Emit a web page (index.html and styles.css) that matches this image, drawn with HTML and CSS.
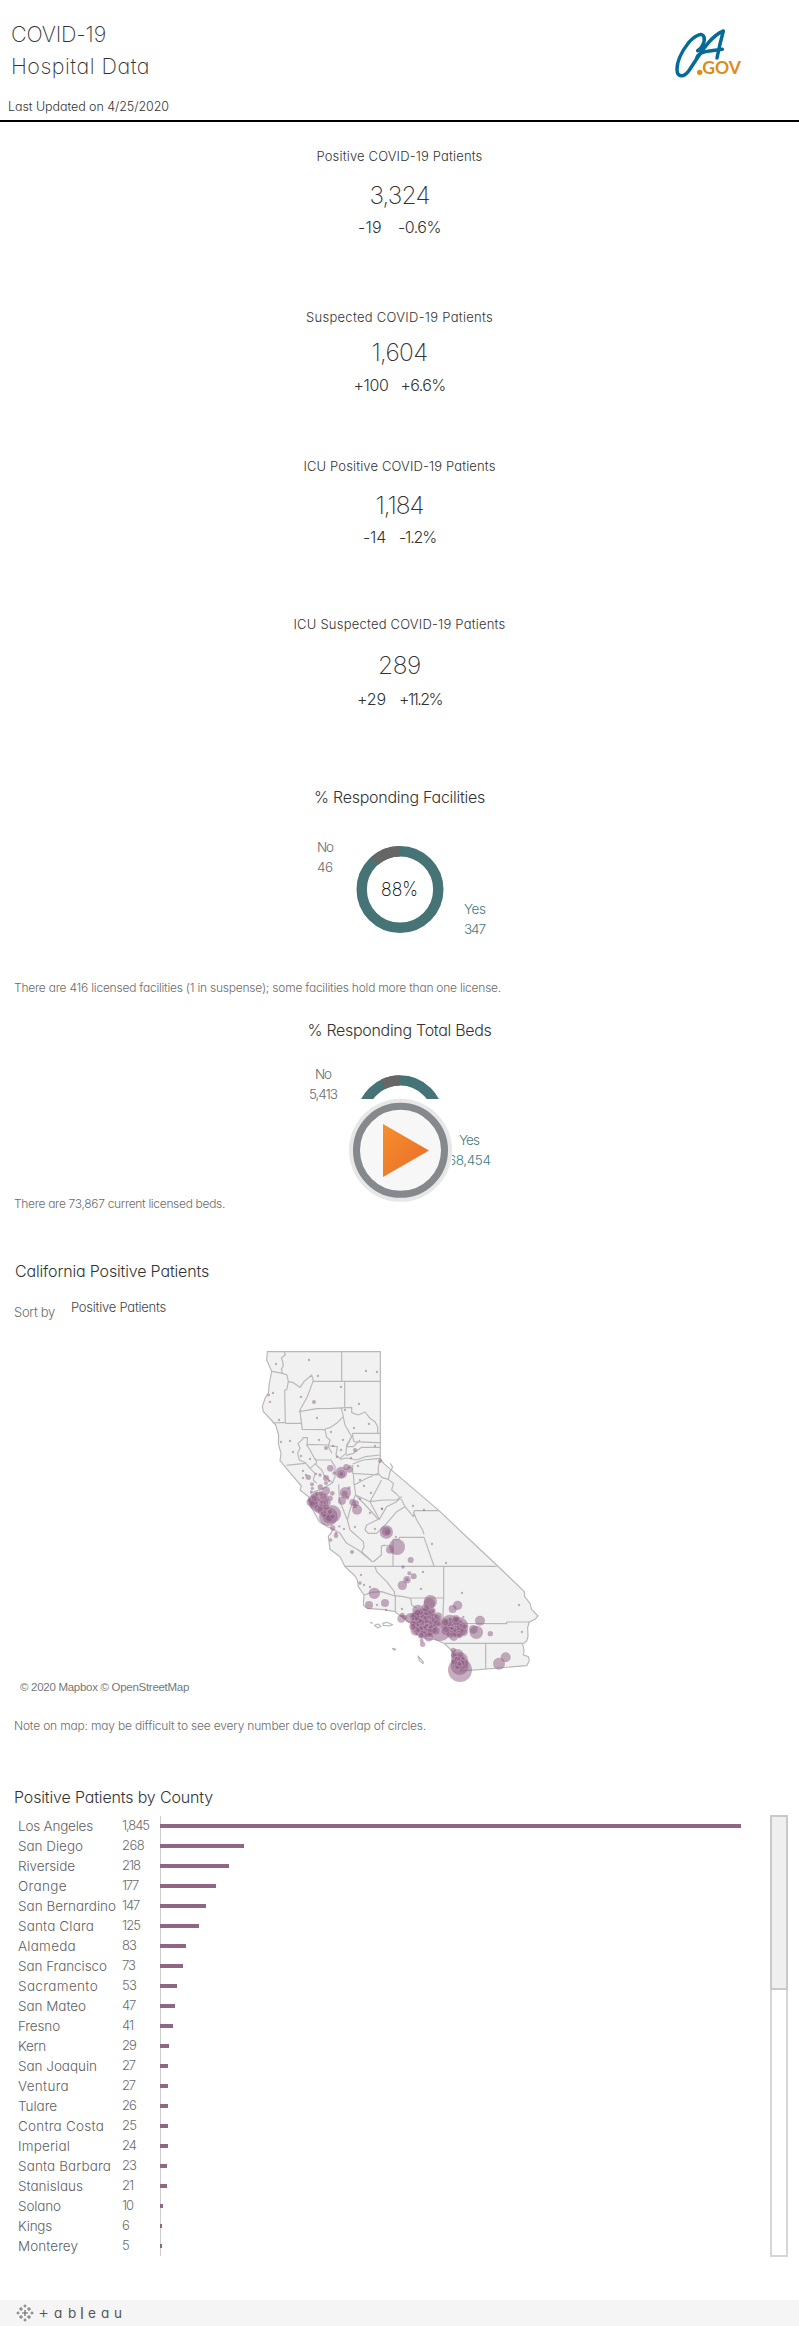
FILE: index.html
```html
<!DOCTYPE html>
<html lang="en">
<head>
<meta charset="utf-8">
<title>COVID-19 Hospital Data</title>
<link rel="stylesheet" href="styles.css">
</head>
<body>
<header class="header">
  <div>
    <h1 class="title"><span data-w="95">COVID-19</span><br><span data-w="139">Hospital Data</span></h1>
    <p class="updated"><span data-w="161">Last Updated on 4/25/2020</span></p>
  </div>
  <svg class="logo" viewBox="0 0 360 240" width="120" height="80">
    <g fill="none" stroke="#046b99" stroke-width="10.5" stroke-linecap="round" stroke-linejoin="round">
      <path d="M143 107C154 102 166 80 162 66C157 50 134 62 115 84C96 108 81 140 81 163C81 188 101 188 116 168C145 126 178 64 220 48C214 70 206 103 201 129"/>
      <path d="M141 126C151 107 185 107 217 103"/>
    </g>
    <circle cx="149" cy="172" r="8" fill="#dc8c18"/>
    <text class="gov" x="157" y="177" textLength="116" lengthAdjust="spacingAndGlyphs">GOV</text>
  </svg>
</header>

<main>
  <section class="kpi kpi-positive">
    <h2 class="kpi-title"><span data-w="166">Positive COVID-19 Patients</span></h2>
    <p class="kpi-value"><span data-w="60">3,324</span></p>
    <p class="kpi-delta"><span data-w="24">-19</span><span data-w="43">-0.6%</span></p>
  </section>
  <section class="kpi kpi-suspected">
    <h2 class="kpi-title"><span data-w="187">Suspected COVID-19 Patients</span></h2>
    <p class="kpi-value"><span data-w="56">1,604</span></p>
    <p class="kpi-delta"><span data-w="35">+100</span><span data-w="45">+6.6%</span></p>
  </section>
  <section class="kpi kpi-icu">
    <h2 class="kpi-title"><span data-w="192">ICU Positive COVID-19 Patients</span></h2>
    <p class="kpi-value"><span data-w="48">1,184</span></p>
    <p class="kpi-delta"><span data-w="23">-14</span><span data-w="37">-1.2%</span></p>
  </section>
  <section class="kpi kpi-icu-suspected">
    <h2 class="kpi-title"><span data-w="212">ICU Suspected COVID-19 Patients</span></h2>
    <p class="kpi-value"><span data-w="43">289</span></p>
    <p class="kpi-delta"><span data-w="29">+29</span><span data-w="43">+11.2%</span></p>
  </section>

  <section class="ratio ratio-facilities">
    <h2 class="heading"><span data-w="171">% Responding Facilities</span></h2>
    <svg class="donut" viewBox="250 830 300 130" width="300" height="130">
      <circle class="ring yes" cx="400" cy="889.5" r="38.3"/>
      <circle class="ring no" cx="400" cy="889.5" r="38.3" pathLength="100" stroke-dasharray="11.7 100" transform="rotate(-132.1 400 889.5)"/>
      <text class="label" x="317" y="852" textLength="17">No</text>
      <text class="label" x="317" y="872" textLength="16">46</text>
      <text class="percent" x="381" y="896" textLength="37" lengthAdjust="spacingAndGlyphs">88%</text>
      <text class="label teal" x="464" y="914" textLength="22">Yes</text>
      <text class="label teal" x="464" y="934" textLength="22">347</text>
    </svg>
    <p class="note"><span data-w="487">There are 416 licensed facilities (1 in suspense); some facilities hold more than one license.</span></p>
  </section>

  <section class="ratio ratio-beds">
    <h2 class="heading"><span data-w="184">% Responding Total Beds</span></h2>
    <svg class="donut" viewBox="250 1060 300 130" width="300" height="130">
      <defs>
        <clipPath id="upper"><rect x="340" y="1060" width="120" height="39"/></clipPath>
        <clipPath id="right"><rect x="452" y="1130" width="60" height="50"/></clipPath>
        <linearGradient id="orange" x1="0" y1="0" x2="1" y2="1"><stop offset="0" stop-color="#f58f2d"/><stop offset="1" stop-color="#e96b2a"/></linearGradient>
      </defs>
      <g clip-path="url(#upper)">
        <circle class="ring yes" cx="400" cy="1118.7" r="38.3"/>
        <circle class="ring no" cx="400" cy="1118.7" r="38.3" pathLength="100" stroke-dasharray="7.3 100" transform="rotate(-116.4 400 1118.7)"/>
      </g>
      <text class="label" x="315" y="1079" textLength="17">No</text>
      <text class="label" x="309" y="1099" textLength="29">5,413</text>
      <text class="label teal" x="459" y="1145" textLength="21">Yes</text>
      <text class="label teal" x="448" y="1165" textLength="43" clip-path="url(#right)">68,454</text>
      <circle cx="400.5" cy="1150.3" r="51.5" fill="#e7e7e7"/>
      <circle cx="400.5" cy="1150.3" r="44" fill="#f7f7f7" stroke="#85888c" stroke-width="7"/>
      <path d="M383 1124L429 1150.5L383 1177Z" fill="url(#orange)"/>
    </svg>
    <p class="note"><span data-w="211">There are 73,867 current licensed beds.</span></p>
  </section>

  <section class="map-section">
    <h2 class="heading"><span data-w="194">California Positive Patients</span></h2>
    <div class="sort"><span class="sort-label"><span data-w="41">Sort by</span></span><span class="sort-value"><span data-w="95">Positive Patients</span></span></div>
    <svg class="map" viewBox="0 30 900 1050" width="300" height="350">
      <path class="state" d="M52 65H391V385L401 400L567 542L660 630L740 705L823 785L824 800L840 820L845 838L864 858L855 868L838 876L833 892L834 920L830 933L818 942L822 962L820 975L835 980L838 992L830 1007L660 1021L632 1023L622 995L605 962L585 942L560 930L525 925L500 890L475 875L455 860L435 845L400 839L352 835L340 825L342 795L325 770L322 750L315 738L285 710L270 680L240 658L235 620L250 598L235 592L208 575L197 555L180 525L176 500L150 480L154 468L130 440L90 392L93 370L85 340L86 315L77 285L64 270L40 245L37 230L45 205L55 190L58 160L65 124L50 90Z"/>
      <g class="county">
        <path d="M103 65L106 75L94 83L98 95L100 108L94 118L98 130L65 124M98 130L111 135L115 155L110 180L104 180L106 277L68 279M106 280H155M115 155L130 158L150 172L162 155L185 135L190 152L172 200L150 240L152 260L157 300M190 154H391M275 65V154M284 154V232M146 245L165 242L200 236L245 235L305 232V248L325 255L345 246L360 265L375 275L383 290V308M274 235L280 260L262 278L242 292L225 297M157 298L225 299L230 322L240 330L235 350L246 370M157 323H172V343L235 345M169 343L180 360L196 390H245M160 326L144 340L150 355L143 370L148 390L166 398L180 415L200 398L196 385M109 406L165 400M180 415L195 430L190 450L200 460M194 400L215 420L225 440L248 458L255 440L255 410L243 390M280 262L285 285L305 320L290 345L288 370L270 385L258 375L262 350L238 348M308 320V310H391M308 320L312 335L380 338H391M305 320L290 350L310 350L330 330M288 376L310 370L335 352H391M270 388L290 384L320 390L345 380L391 375M308 402L340 390L391 385M308 405V430L385 435M310 430L312 465L350 445L385 430V410L391 388M313 463L317 495L360 515L395 450M385 430L395 442L415 448L420 425L428 412L421 400M415 448L430 460L425 480L440 492L455 510L465 530L490 560L493 542H567M490 545L500 570L518 600L522 613M360 515L400 510L440 510L455 500M360 515L388 568L410 530L440 515L455 500M317 495L360 540L385 568L350 585L345 600L355 610L380 610L410 580L440 545L465 530M429 650V628L448 628V622H522L552 708M370 696L394 675V648L429 645M394 648L405 645M429 650V709M285 709H740M316 495L300 540L292 570L300 600L340 635L342 650L335 665L368 696M250 598L270 610L290 640L325 660L368 696M248 458L220 475L180 490M266 463L268 510L280 540L292 570M375 709L380 725L410 755L433 785L434 798M343 795L365 787L395 785L434 798M436 797L460 800L482 805L485 825L500 835M482 804H581M581 709V804L579 850V865L610 870L640 880L770 881L770 876H838M585 940H818M707 942V1018M436 797V845"/>
        <path d="M360 877L368 880M373 886L384 882L393 889L384 894ZM398 880L411 877L428 884L417 888L400 886ZM427 955L437 957L433 961ZM504 978L520 996L519 1001L508 992Z"/>
      </g>
      <g id="sites"></g>
    </svg>
    <p class="credit"><span data-w="169">© 2020 Mapbox © OpenStreetMap</span></p>
    <p class="note"><span data-w="412">Note on map: may be difficult to see every number due to overlap of circles.</span></p>
  </section>

  <section class="county-section">
    <h2 class="heading"><span data-w="199">Positive Patients by County</span></h2>
    <div class="chart">
      <div class="rows" id="rows"></div>
      <div class="scroll"><div class="thumb"></div></div>
    </div>
  </section>
</main>

<footer class="footer">
  <svg width="18" height="18" viewBox="0 0 18 18" fill="none" stroke="#666">
    <path stroke-width="1.2" d="M9 6V12M6 9H12"/>
    <path d="M5 3V7M3 5H7M13 3V7M11 5H15M5 11V15M3 13H7M13 11V15M11 13H15M9 .5V3.5M7.5 2H10.5M9 14.5V17.5M7.5 16H10.5M2 7.5V10.5M.5 9H3.5M16 7.5V10.5M14.5 9H17.5" stroke-width=".9"/>
  </svg>
  <span class="wordmark"><span class="tee">+</span><span>a</span><span>b</span><span class="ell">l</span><span>e</span><span>a</span><span>u</span></span>
</footer>
<script src="app.js"></script>
</body>
</html>
```
FILE: styles.css
```css
* { box-sizing: border-box; }
body {
  margin: 0;
  background: #fff;
  color: #333;
  font-family: Inter, "Open Sans", sans-serif;
  font-weight: 300;
  font-feature-settings: "cv11";
}
h1, h2, p { margin: 0; font-weight: 300; white-space: nowrap; }
[data-w] { display: inline-block; }

.header {
  display: flex;
  justify-content: space-between;
  height: 122px;
  border-bottom: 2px solid #000;
  padding: 17px 29px 0 8px;
}
.title { padding: 1px 0 0 3px; font-size: 21.5px; font-weight: 200; line-height: 32px; }
.updated { margin-top: 15px; font-size: 12.5px; line-height: 20px; }
.logo { margin-top: -2px; }
.gov { font: 700 50px Lato, sans-serif; fill: #dc8c18; }

.kpi { text-align: center; }
.kpi-title { font-size: 13px; line-height: 20px; }
.kpi-value { font-size: 24.5px; font-weight: 200; line-height: 30px; }
.kpi-delta { display: flex; justify-content: center; font-size: 16px; line-height: 20px; }
.kpi-positive { height: 168px; padding-top: 24px; }
.kpi-positive .kpi-value { margin: 14px 0 7px; }
.kpi-positive .kpi-delta { gap: 16px; }
.kpi-suspected { height: 150px; padding-top: 17px; }
.kpi-suspected .kpi-value { margin: 10px 0 8px; }
.kpi-suspected .kpi-delta { gap: 12px; }
.kpi-icu { height: 158px; padding-top: 16px; }
.kpi-icu .kpi-value { margin: 14px 0 7px; }
.kpi-icu .kpi-delta { gap: 13px; }
.kpi-icu-suspected { height: 172px; padding-top: 16px; }
.kpi-icu-suspected .kpi-value { margin: 16px 0 9px; }
.kpi-icu-suspected .kpi-delta { gap: 13px; }

.heading { font-size: 16px; line-height: 24px; }
.ratio .heading { text-align: center; }
.ratio-facilities { height: 234px; padding-top: 15px; }
.ratio-facilities .donut { margin: 21px auto 18px; }
.ratio-beds { height: 246px; padding-top: 14px; }
.ratio-beds .donut { margin: 18px auto 4px; }
.donut { display: block; overflow: visible; }
.ring { fill: none; stroke-width: 10.4; }
.ring.yes { stroke: #457376; }
.ring.no { stroke: #666; }
.label { font-size: 13.5px; fill: #6b6b6b; }
.label.teal { fill: #457b7e; }
.percent { font-size: 19.5px; font-weight: 200; fill: #000; }
.note { padding-left: 14px; font-size: 12px; line-height: 20px; color: #6b6b6b; }

.map-section { height: 534px; padding-top: 9px; }
.map-section .heading { padding-left: 15px; }
.sort { display: flex; gap: 15px; padding: 14px 0 0 14px; height: 57px; line-height: 20px; }
.sort-label { padding-top: 5px; font-size: 13px; color: #6b6b6b; }
.sort-value { margin-left: 1px; font-size: 13px; color: #444; }
.map { display: block; margin-left: 250px; }
.state { fill: #f1f1f1; stroke: #b8b8b8; stroke-width: 3.5; stroke-linejoin: round; }
.county { fill: none; stroke: #b8b8b8; stroke-width: 3.5; stroke-linejoin: round; }
.site { fill: #8d5b82; fill-opacity: .5; }
.site.rim { stroke: #c7abc0; stroke-width: 1.5; }
.credit { margin-top: -13px; padding-left: 20px; font: 11.5px/20px "Liberation Sans", Arial, sans-serif; color: #777; }
.map-section .note { margin-top: 19px; }

.county-section .heading { padding: 1px 0 0 14px; height: 25px; }
.county-section { height: 516px; }
.chart { display: flex; justify-content: space-between; padding: 6px 11px 0 18px; }
.rows { width: 740px; margin-top: 1px; }
.row { display: grid; grid-template-columns: 104px 38px 1fr; height: 20px; line-height: 20px; font-size: 13.5px; color: #5f5f5f; }
.value { margin-top: -1px; font-size: 13px; color: #6b6b6b; }
.track { border-left: 1px solid #ccc; padding-top: 8px; }
.bar { height: 4px; margin-left: -1px; background: #916584; }
.scroll { width: 18px; height: 442px; border: 2px solid #d6d6d6; }
.thumb { width: 18px; height: 175px; margin: -2px; background: #efefef; border: 2px solid #c9c9c9; }

.footer { display: flex; align-items: center; height: 26px; padding-left: 16px; background: #f5f5f5; }
.wordmark { display: grid; grid-template-columns: 16px 14px 12px 8px 13px 13px 12px; margin-left: 4px; font: 13.5px/20px Inter, sans-serif; font-feature-settings: "cv11"; color: #555; }
.tee { font-size: 17px; font-weight: 300; line-height: 18px; }
.ell { font-size: 16px; }
```
FILE: app.js
```js
const counties = [
  ["Los Angeles", "1,845", 581, 75, 27], ["San Diego", "268", 84, 65, 22], ["Riverside", "218", 69, 57, 18],
  ["Orange", "177", 56, 49, 16], ["San Bernardino", "147", 46, 98, 17], ["Santa Clara", "125", 39, 76, 18],
  ["Alameda", "83", 26, 58, 14], ["San Francisco", "73", 23, 89, 13], ["Sacramento", "53", 17, 80, 14],
  ["San Mateo", "47", 15, 68, 13], ["Fresno", "41", 13, 42, 11], ["Kern", "29", 9, 28, 14],
  ["San Joaquin", "27", 8, 79, 13], ["Ventura", "27", 8, 51, 13], ["Tulare", "26", 8, 39, 14],
  ["Contra Costa", "25", 8, 86, 14], ["Imperial", "24", 8, 52, 14], ["Santa Barbara", "23", 7, 93, 14],
  ["Stanislaus", "21", 7, 65, 11], ["Solano", "10", 3, 43, 11], ["Kings", "6", 2, 34, 7], ["Monterey", "5", 2, 60, 7]
];
document.getElementById("rows").innerHTML = counties.map(([name, value, bar, nw, vw]) =>
  `<div class="row"><span><span data-w="${nw}">${name}</span></span><span class="value"><span data-w="${vw}">${value}</span></span><div class="track"><div class="bar" style="width:${bar}px"></div></div></div>`).join("");

// Facility markers: x, y, radius.
const sites = `78,102 177,90 204,138 348,123 381,126 273,171 327,222 285,240 192,216,6 153,201 69,189 56,195,4 60,216 87,270
201,264 243,306 312,294 357,282 207,330 279,330 249,348 228,354,6 273,360 315,360,6 375,348 303,384 261,381 93,336 120,333 129,366 153,378 180,387
390,393,6 324,408 330,450 342,468 363,489 396,537 330,507 241,415,10 252,429,5 210,435,5 159,423 159,444 168,435 175,442,8 198,432 228,444,9 237,453 228,459,6
186,463,6 187,475,5 184,485,4 211,471,8 228,482,12 247,490,7 274,428,18 274,432,11 289,411,9 299,419,9 300,410,5
286,488,17 284,491,9 276,512,12 297,474,5 292,503,6 308,517,10 318,520,9 321,539,15 314,528,7
360,549 396,536 489,528 522,540 315,591 375,597 546,642 282,597 268,589 248,594,8 258,617,7 242,630,5 258,609,4 306,666,6
409,606,20 409,604,13 413,606,8 438,621 441,651,24 420,659,12 482,690,9 459,711,5 519,726 513,777 478,730,6 491,739,9 471,749,11 471,749,5 457,766,14
333,735 330,759,5 342,765 360,771 373,790,17 357,825,12 405,819,12 381,825 408,840 456,837 636,789 588,699 807,825 816,906
541,815,20 538,821,17 504,841,17 623,826,14 608,837,12 690,872,15 679,907,20 670,898,13 640,861 721,911,8 767,982,15 747,1001,18 518,943,8 515,932,6
454,866,12 457,855,7 464,862,7 480,865,15 489,858,10 610,961,8 611,975,8 622,976,19 630,1020,36 629,1008,27 629,992,26 630,982,9
205,515,30 190,512,15 235,560,28 246,552,27 235,562,17`;
const groups = [
  [[182, 516, 12], [192, 522, 14], [195, 503, 12], [205, 535, 13], [215, 540, 14], [222, 502, 13], [231, 517, 11], [218, 520, 11], [228, 532, 10], [238, 563, 12], [221, 553, 10], [240, 505, 8], [213, 491, 8], [200, 492, 7], [215, 516, 6], [240, 545, 8], [248, 560, 8], [207, 510, 6], [225, 545, 6]],
  [[274, 432, 7], [622, 990, 11], [613, 995, 10], [635, 998, 10], [625, 1005, 12], [628, 1002, 7], [621, 1013, 7], [618, 985, 6], [640, 985, 7]]
];
const la = [];
for (let i = 0; i < 92; i++) {
  const a = i * 2.399, d = Math.sqrt(i / 92);
  const left = i % 5 < 3;
  const cx = left ? 528 : 612, cy = left ? 878 : 893;
  la.push([cx + Math.cos(a) * d * (left ? 43 : 33), cy + Math.sin(a) * d * (left ? 44 : 29), 5 + (i * 7) % 10]);
}
const circle = (x, y, r = 3.5, c = "") => `<circle class="site${c}" cx="${x}" cy="${y}" r="${r}"/>`;
let marks = sites.split(/\s+/).map(s => circle(...s.split(",").map(Number))).join("");
marks += circle(523, 880, 42) + circle(515, 865, 30) + circle(570, 900, 33) + circle(626, 890, 29) + circle(600, 882, 28);
marks += [...groups.flat(), ...la].map(([x, y, r]) => circle(x, y, r, " rim")).join("");
document.getElementById("sites").innerHTML = marks;

document.querySelectorAll("[data-w]").forEach(el => {
  const n = el.textContent.length;
  const gap = (el.dataset.w - el.getBoundingClientRect().width) / n;
  el.style.letterSpacing = gap.toFixed(3) + "px";
});
```
